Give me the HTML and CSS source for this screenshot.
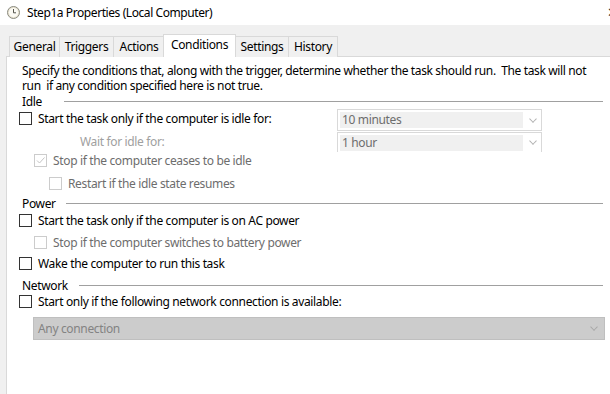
FILE: index.html
```html
<!DOCTYPE html>
<html>
<head>
<meta charset="utf-8">
<link rel="stylesheet" href="styles.css">
</head>
<body>
<div class="titlebar">
  <svg class="appicon" width="13" height="13" viewBox="0 0 13 13">
    <circle cx="6.5" cy="6.5" r="6" fill="#e9e4d2" stroke="#8a8a80" stroke-width="1"/>
    <circle cx="6.5" cy="6.5" r="4.6" fill="#fbfaf4"/>
    <path d="M6.5 3 V6.8 H9" fill="none" stroke="#55554d" stroke-width="1"/>
  </svg>
  <span class="title">Step1a Properties (Local Computer)</span>
  <span class="close">✕</span>
</div>
<div class="tabs">
  <div class="tab t-general">General</div>
  <div class="tab t-triggers">Triggers</div>
  <div class="tab t-actions">Actions</div>
  <div class="tab active t-conditions">Conditions</div>
  <div class="tab t-settings">Settings</div>
  <div class="tab t-history">History</div>
</div>
<div class="panel">
  <p class="desc">Specify the conditions that, along with the trigger, determine whether the task should run.&nbsp; The task will not run&nbsp; if any condition specified here is not true.</p>
  <div class="group g-idle"><span>Idle</span><i></i></div>
  <div class="row r-idle">
    <span class="cb"></span><span class="lbl">Start the task only if the computer is idle for:</span>
    <div class="combo"><span>10 minutes</span><b class="chev"></b></div>
  </div>
  <div class="row r-wait">
    <span class="lbl dim wait">Wait for idle for:</span>
    <div class="combo cut"><span>1 hour</span><b class="chev"></b></div>
  </div>
  <div class="row r-stop ind1">
    <span class="cb off checked"><svg width="11" height="11" viewBox="0 0 11 11"><path d="M2 5.5 L4.5 8 L9.5 2.5" fill="none" stroke="#c4c4c4" stroke-width="1"/></svg></span><span class="lbl dim2">Stop if the computer ceases to be idle</span>
  </div>
  <div class="row r-restart ind2">
    <span class="cb off"></span><span class="lbl dim2">Restart if the idle state resumes</span>
  </div>
  <div class="group g-power"><span>Power</span><i></i></div>
  <div class="row r-ac">
    <span class="cb"></span><span class="lbl">Start the task only if the computer is on AC power</span>
  </div>
  <div class="row r-batt ind1">
    <span class="cb off"></span><span class="lbl dim2">Stop if the computer switches to battery power</span>
  </div>
  <div class="row r-wake">
    <span class="cb"></span><span class="lbl">Wake the computer to run this task</span>
  </div>
  <div class="group g-net"><span>Network</span><i></i></div>
  <div class="row r-net">
    <span class="cb"></span><span class="lbl">Start only if the following network connection is available:</span>
  </div>
  <div class="bigcombo"><span>Any connection</span><b class="chev"></b></div>
</div>
</body>
</html>
```
FILE: styles.css
```css
html, body {
  margin: 0;
  padding: 0;
}
body {
  width: 610px;
  height: 394px;
  overflow: hidden;
  display: flex;
  flex-direction: column;
  background: #f0f0f0;
  font-family: "Noto Sans", "Open Sans", sans-serif;
  font-size: 12px;
  letter-spacing: -0.35px;
  color: #000;
}
.titlebar {
  flex: none;
  height: 25px;
  background: #fff;
  display: flex;
  align-items: center;
  position: relative;
}
.appicon {
  margin-left: 7px;
  margin-right: 7px;
}
.title {
  font-size: 12px;
  letter-spacing: -0.42px;
  color: #000;
}
.close {
  position: absolute;
  right: -8px;
  top: 3px;
  font-size: 13px;
  color: #333;
}
.tabs {
  flex: none;
  display: flex;
  align-items: flex-end;
  padding-left: 9px;
  height: 31px;
  position: relative;
  z-index: 1;
}
.tab {
  box-sizing: border-box;
  height: 21px;
  line-height: 19px;
  text-align: center;
  border: 1px solid #d9d9d9;
  border-bottom: none;
  border-right: none;
  background: #f0f0f0;
  margin-bottom: -1px;
  font-size: 12px;
}
.t-general { width: 50px; }
.t-triggers { width: 54px; }
.t-actions { width: 51px; }
.t-conditions { width: 73px; }
.t-settings { width: 52px; }
.t-history { width: 50px; }
.tab:last-child {
  border-right: 1px solid #d9d9d9;
}
.tab.active {
  height: 23px;
  line-height: 20px;
  background: #fff;
  border-right: 1px solid #d9d9d9;
  margin-left: -1px;
  position: relative;
  z-index: 2;
}
.tab.active + .tab { border-left: none; }
.panel {
  flex: 1;
  margin-left: 6px;
  background: #fff;
  border-left: 1px solid #d9d9d9;
  border-top: 1px solid #d9d9d9;
  padding-left: 12px;
  position: relative;
}
.desc {
  margin: 0;
  padding: 6px 0 0 3px;
  width: 570px;
  line-height: 15px;
  letter-spacing: -0.37px;
}
.group {
  display: flex;
  align-items: center;
  height: 12px;
  padding-left: 3px;
  margin-right: 7px;
}
.group i {
  flex: 1;
  height: 1px;
  background: #a0a0a0;
  margin-left: 8px;
  margin-top: 1px;
}
.group.g-idle { margin-top: 2px; }
.group.g-idle i { margin-left: 22px; }
.group.g-power i { margin-left: 10px; }
.group.g-net i { margin-left: 11px; }
.row {
  display: flex;
  align-items: center;
  height: 16px;
}
.cb {
  width: 11px;
  height: 11px;
  border: 1px solid #333;
  background: #fff;
  margin-right: 6px;
  flex: none;
  display: flex;
}
.cb.off { border-color: #cccccc; }
.ind1 { padding-left: 15px; }
.ind2 { padding-left: 30px; }
.dim { color: #a0a0a0; }
.dim2 { color: #6d6d6d; }
.wait { margin-left: 61px; }
.combo {
  position: absolute;
  left: 318px;
  width: 201px;
  height: 20px;
  border: 1px solid #d9d9d9;
  background: #fff;
  display: flex;
  align-items: center;
  color: #6d6d6d;
  padding: 0 0 0 2px;
  box-sizing: content-box;
}
.combo span {
  background: #f0f0f0;
  flex: none;
  width: 181px;
  height: 16px;
  line-height: 16px;
  padding-left: 2px;
}
.combo.cut { border-bottom: none; height: 19px; }
.chev {
  width: 5px;
  height: 5px;
  border-right: 1px solid #b0b0b0;
  border-bottom: 1px solid #b0b0b0;
  transform: rotate(45deg) scale(0.9, 0.9);
  margin-left: 7px;
  margin-top: -3px;
}
.r-idle { margin-top: 3px; position: relative; }
.r-idle .combo { top: -1px; }
.r-wait { margin-top: 7px; position: relative; }
.r-wait .combo { top: -1px; }
.r-stop { margin-top: 3px; }
.r-restart { margin-top: 7px; }
.g-power { margin-top: 6px; }
.r-ac { margin-top: 3px; }
.r-batt { margin-top: 6px; }
.r-wake { margin-top: 5px; }
.g-net { margin-top: 8px; }
.r-net { margin-top: 2px; }
.bigcombo {
  margin: 8px 0 0 14px;
  width: 566px;
  height: 21px;
  border: 1px solid #bfbfbf;
  background: #cccccc;
  color: #838383;
  display: flex;
  align-items: center;
  justify-content: space-between;
  padding-left: 4px;
}
.bigcombo .chev {
  margin-right: 7px;
  border-color: #a8a8a8;
}
```
